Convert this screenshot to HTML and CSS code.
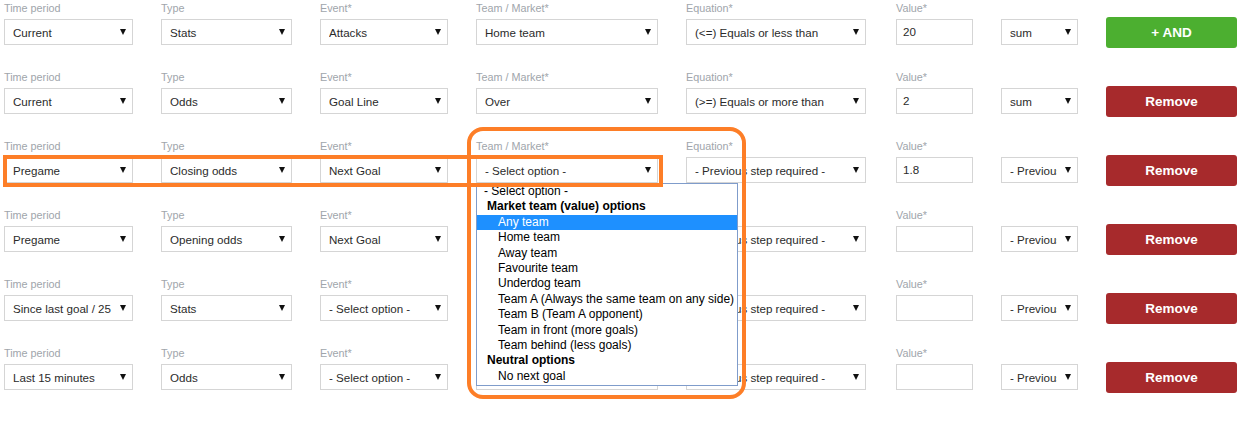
FILE: index.html
```html
<!DOCTYPE html>
<html>
<head>
<meta charset="utf-8">
<link rel="stylesheet" href="styles.css">
</head>
<body>
<div class="board">

  <div class="row">
    <div class="field w1"><div class="label">Time period</div><div class="select"><span class="val">Current</span><span class="caret"></span></div></div>
    <div class="field w2"><div class="label">Type</div><div class="select"><span class="val">Stats</span><span class="caret"></span></div></div>
    <div class="field w3"><div class="label">Event*</div><div class="select"><span class="val">Attacks</span><span class="caret"></span></div></div>
    <div class="field w4"><div class="label">Team / Market*</div><div class="select"><span class="val">Home team</span><span class="caret"></span></div></div>
    <div class="field w5"><div class="label">Equation*</div><div class="select"><span class="val">(&lt;=) Equals or less than</span><span class="caret"></span></div></div>
    <div class="field w6"><div class="label">Value*</div><div class="input">20</div></div>
    <div class="field w7"><div class="label"></div><div class="select"><span class="val">sum</span><span class="caret"></span></div></div>
    <div class="field w8"><div class="label"></div><button class="btn btn-and">+ AND</button></div>
  </div>

  <div class="row">
    <div class="field w1"><div class="label">Time period</div><div class="select"><span class="val">Current</span><span class="caret"></span></div></div>
    <div class="field w2"><div class="label">Type</div><div class="select"><span class="val">Odds</span><span class="caret"></span></div></div>
    <div class="field w3"><div class="label">Event*</div><div class="select"><span class="val">Goal Line</span><span class="caret"></span></div></div>
    <div class="field w4"><div class="label">Team / Market*</div><div class="select"><span class="val">Over</span><span class="caret"></span></div></div>
    <div class="field w5"><div class="label">Equation*</div><div class="select"><span class="val">(&gt;=) Equals or more than</span><span class="caret"></span></div></div>
    <div class="field w6"><div class="label">Value*</div><div class="input">2</div></div>
    <div class="field w7"><div class="label"></div><div class="select"><span class="val">sum</span><span class="caret"></span></div></div>
    <div class="field w8"><div class="label"></div><button class="btn btn-remove">Remove</button></div>
  </div>

  <div class="row">
    <div class="field w1"><div class="label">Time period</div><div class="select"><span class="val">Pregame</span><span class="caret"></span></div></div>
    <div class="field w2"><div class="label">Type</div><div class="select"><span class="val">Closing odds</span><span class="caret"></span></div></div>
    <div class="field w3"><div class="label">Event*</div><div class="select"><span class="val">Next Goal</span><span class="caret"></span></div></div>
    <div class="field w4 open"><div class="label">Team / Market*</div><div class="select"><span class="val">- Select option -</span><span class="caret"></span></div>
      <ul class="dropdown">
        <li class="opt">- Select option -</li>
        <li class="group">Market team (value) options</li>
        <li class="opt sub active">Any team</li>
        <li class="opt sub">Home team</li>
        <li class="opt sub">Away team</li>
        <li class="opt sub">Favourite team</li>
        <li class="opt sub">Underdog team</li>
        <li class="opt sub">Team A (Always the same team on any side)</li>
        <li class="opt sub">Team B (Team A opponent)</li>
        <li class="opt sub">Team in front (more goals)</li>
        <li class="opt sub">Team behind (less goals)</li>
        <li class="group">Neutral options</li>
        <li class="opt sub">No next goal</li>
      </ul>
    </div>
    <div class="field w5"><div class="label">Equation*</div><div class="select"><span class="val">- Previous step required -</span><span class="caret"></span></div></div>
    <div class="field w6"><div class="label">Value*</div><div class="input">1.8</div></div>
    <div class="field w7"><div class="label"></div><div class="select"><span class="val">- Previous step required -</span><span class="caret"></span></div></div>
    <div class="field w8"><div class="label"></div><button class="btn btn-remove">Remove</button></div>
  </div>

  <div class="row">
    <div class="field w1"><div class="label">Time period</div><div class="select"><span class="val">Pregame</span><span class="caret"></span></div></div>
    <div class="field w2"><div class="label">Type</div><div class="select"><span class="val">Opening odds</span><span class="caret"></span></div></div>
    <div class="field w3"><div class="label">Event*</div><div class="select"><span class="val">Next Goal</span><span class="caret"></span></div></div>
    <div class="field w4"><div class="label">Team / Market*</div><div class="select"><span class="val">- Select option -</span><span class="caret"></span></div></div>
    <div class="field w5"><div class="label">Equation*</div><div class="select"><span class="val">- Previous step required -</span><span class="caret"></span></div></div>
    <div class="field w6"><div class="label">Value*</div><div class="input"></div></div>
    <div class="field w7"><div class="label"></div><div class="select"><span class="val">- Previous step required -</span><span class="caret"></span></div></div>
    <div class="field w8"><div class="label"></div><button class="btn btn-remove">Remove</button></div>
  </div>

  <div class="row">
    <div class="field w1"><div class="label">Time period</div><div class="select"><span class="val">Since last goal / 25</span><span class="caret"></span></div></div>
    <div class="field w2"><div class="label">Type</div><div class="select"><span class="val">Stats</span><span class="caret"></span></div></div>
    <div class="field w3"><div class="label">Event*</div><div class="select"><span class="val">- Select option -</span><span class="caret"></span></div></div>
    <div class="field w4"><div class="label">Team / Market*</div><div class="select"><span class="val">- Select option -</span><span class="caret"></span></div></div>
    <div class="field w5"><div class="label">Equation*</div><div class="select"><span class="val">- Previous step required -</span><span class="caret"></span></div></div>
    <div class="field w6"><div class="label">Value*</div><div class="input"></div></div>
    <div class="field w7"><div class="label"></div><div class="select"><span class="val">- Previous step required -</span><span class="caret"></span></div></div>
    <div class="field w8"><div class="label"></div><button class="btn btn-remove">Remove</button></div>
  </div>

  <div class="row">
    <div class="field w1"><div class="label">Time period</div><div class="select"><span class="val">Last 15 minutes</span><span class="caret"></span></div></div>
    <div class="field w2"><div class="label">Type</div><div class="select"><span class="val">Odds</span><span class="caret"></span></div></div>
    <div class="field w3"><div class="label">Event*</div><div class="select"><span class="val">- Select option -</span><span class="caret"></span></div></div>
    <div class="field w4"><div class="label">Team / Market*</div><div class="select"><span class="val">- Select option -</span><span class="caret"></span></div></div>
    <div class="field w5"><div class="label">Equation*</div><div class="select"><span class="val">- Previous step required -</span><span class="caret"></span></div></div>
    <div class="field w6"><div class="label">Value*</div><div class="input"></div></div>
    <div class="field w7"><div class="label"></div><div class="select"><span class="val">- Previous step required -</span><span class="caret"></span></div></div>
    <div class="field w8"><div class="label"></div><button class="btn btn-remove">Remove</button></div>
  </div>

  <div class="mark mark-row"></div>
  <div class="mark mark-col"></div>
</div>
</body>
</html>
```

FILE: styles.css
```css
* { box-sizing: border-box; }

html, body {
  margin: 0;
  padding: 0;
  background: #ffffff;
}

body {
  font-family: "Liberation Sans", Arial, sans-serif;
  color: #2b2b2b;
}

.board {
  position: relative;
  padding: 2px 0 0 4px;
  width: 1254px;
  height: 436px;
}

.row {
  display: flex;
  gap: 28px;
  height: 69px;
  align-items: flex-start;
}

.field {
  display: flex;
  flex-direction: column;
  flex: none;
}

.w1 { width: 129px; }
.w2 { width: 131px; }
.w3 { width: 128px; }
.w4 { width: 182px; }
.w5 { width: 180px; margin-right: 2px; }
.w6 { width: 77px; }
.w7 { width: 77px; }
.w8 { width: 131px; }

.label {
  height: 13px;
  line-height: 13px;
  margin-bottom: 4px;
  font-size: 10.8px;
  color: #a0a5ab;
  white-space: nowrap;
}

.select {
  display: flex;
  align-items: center;
  height: 26px;
  border: 1px solid #d5d5d5;
  background: #fff;
  padding: 0 5px 0 8px;
  font-size: 11.6px;
  color: #2b2b2b;
}

.select .val {
  flex: 1;
  min-width: 0;
  overflow: hidden;
  white-space: nowrap;
  margin-right: 8px;
}

.caret {
  flex: none;
  width: 0;
  height: 0;
  border-left: 3px solid transparent;
  border-right: 3px solid transparent;
  border-top: 6px solid #111;
  margin-right: 1px;
}

.input {
  height: 26px;
  border: 1px solid #d5d5d5;
  background: #fff;
  padding: 0 6px;
  font-size: 11.6px;
  line-height: 24px;
  color: #2b2b2b;
}

.btn {
  margin-top: -2px;
  height: 31px;
  width: 131px;
  border: none;
  border-radius: 3px;
  font-family: "Liberation Sans", Arial, sans-serif;
  font-weight: bold;
  font-size: 13.5px;
  color: #fff;
  padding: 0;
  cursor: pointer;
}

.btn-and { background: #4caf30; }
.btn-remove { background: #a72a2c; }

.open { position: relative; }

.dropdown {
  position: absolute;
  left: 0;
  top: 43px;
  width: 262px;
  margin: 0;
  padding: 0 0 1px 0;
  list-style: none;
  background: #fff;
  border: 1px solid #7f9ccb;
  z-index: 5;
  font-size: 12px;
  color: #000;
}

.dropdown li {
  height: 15.4px;
  line-height: 15.4px;
  white-space: nowrap;
}

.dropdown .opt { padding-left: 7px; }
.dropdown .group { padding-left: 10px; font-weight: bold; }
.dropdown .sub { padding-left: 21px; }
.dropdown .active { background: #1e90ff; color: #fff; }

.mark {
  position: absolute;
  border-style: solid;
  border-color: #fd7e27;
  z-index: 10;
  pointer-events: none;
}

.mark-row {
  left: 3px;
  top: 155px;
  width: 660px;
  height: 32px;
  border-width: 4px;
}

.mark-col {
  left: 467px;
  top: 127px;
  width: 279px;
  height: 272px;
  border-width: 4.5px;
  border-radius: 16px;
}
```
